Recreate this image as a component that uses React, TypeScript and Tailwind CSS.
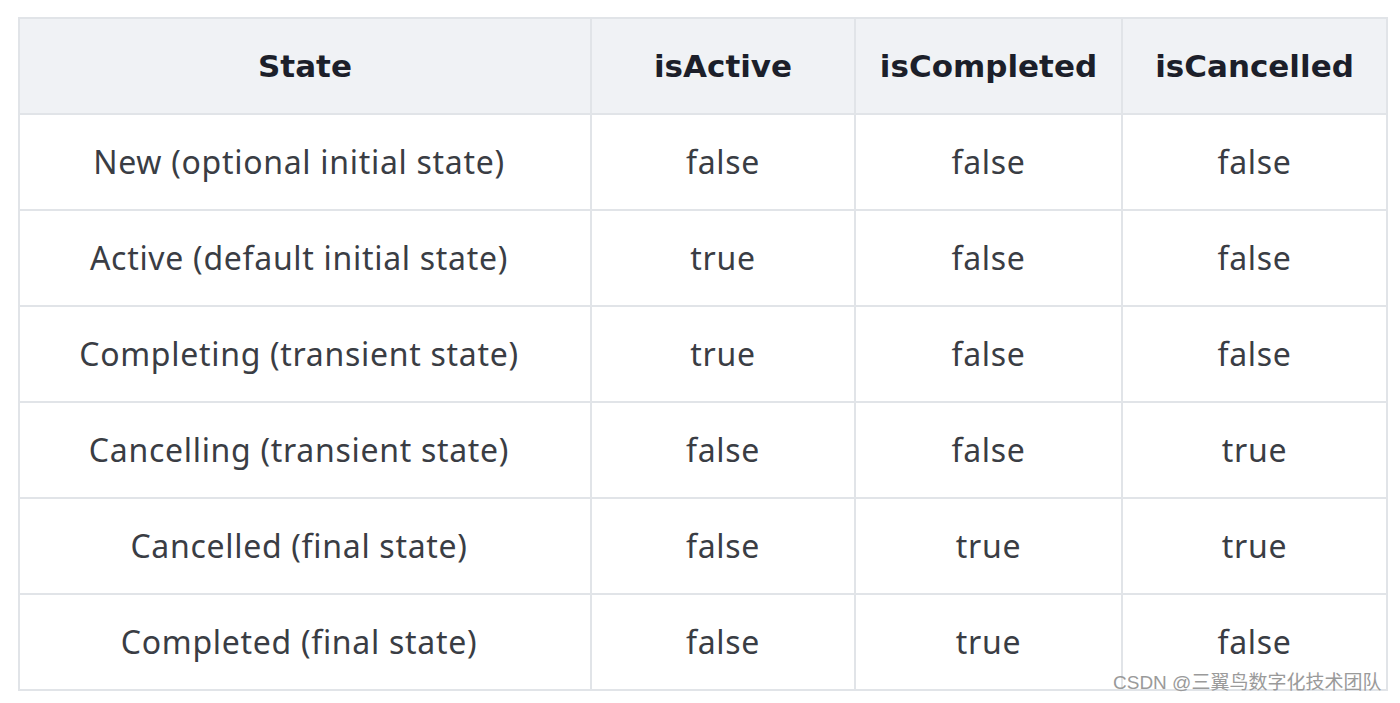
import React from "react";

const rows: [string, string, string, string][] = [
  ["New (optional initial state)", "false", "false", "false"],
  ["Active (default initial state)", "true", "false", "false"],
  ["Completing (transient state)", "true", "false", "false"],
  ["Cancelling (transient state)", "false", "false", "true"],
  ["Cancelled (final state)", "false", "true", "true"],
  ["Completed (final state)", "false", "true", "false"],
];

export default function App() {
  return (
    <div className="relative w-[1400px] h-[703px] bg-white overflow-hidden" style={{ fontFamily: '"Noto Sans", "Open Sans", sans-serif' }}>
      <div className="pl-[18px] pt-[17px]">
        <table className="border-collapse table-fixed w-[1368px]">
          <colgroup>
            <col className="w-[572px]" />
            <col className="w-[264px]" />
            <col className="w-[267px]" />
            <col className="w-[265px]" />
          </colgroup>
          <thead>
            <tr className="bg-[#f0f2f5] h-[96px]">
              {["State", "isActive", "isCompleted", "isCancelled"].map((h) => (
                <th key={h} className="border-2 border-[#e1e4e8] text-[31px] font-bold text-[#1c1f2a] text-center" style={{ fontFamily: 'Verdana, "DejaVu Sans", sans-serif' }}>
                  {h}
                </th>
              ))}
            </tr>
          </thead>
          <tbody>
            {rows.map((r, i) => (
              <tr key={i} className="h-[96px]">
                {r.map((c, j) => (
                  <td key={j} className={`border-2 border-[#e1e4e8] text-[32px] tracking-[0.7px] text-[#3a3d44] text-center ${j === 0 ? "pr-[12px]" : ""}`}>
                    {c}
                  </td>
                ))}
              </tr>
            ))}
          </tbody>
        </table>
      </div>
      <div className="absolute left-[1113px] top-[670px] text-[19px] text-[#9a9a9a] leading-[26px]" style={{ fontFamily: '"Liberation Sans", "Noto Sans CJK SC", sans-serif' }}>
        CSDN @三翼鸟数字化技术团队
      </div>
    </div>
  );
}
